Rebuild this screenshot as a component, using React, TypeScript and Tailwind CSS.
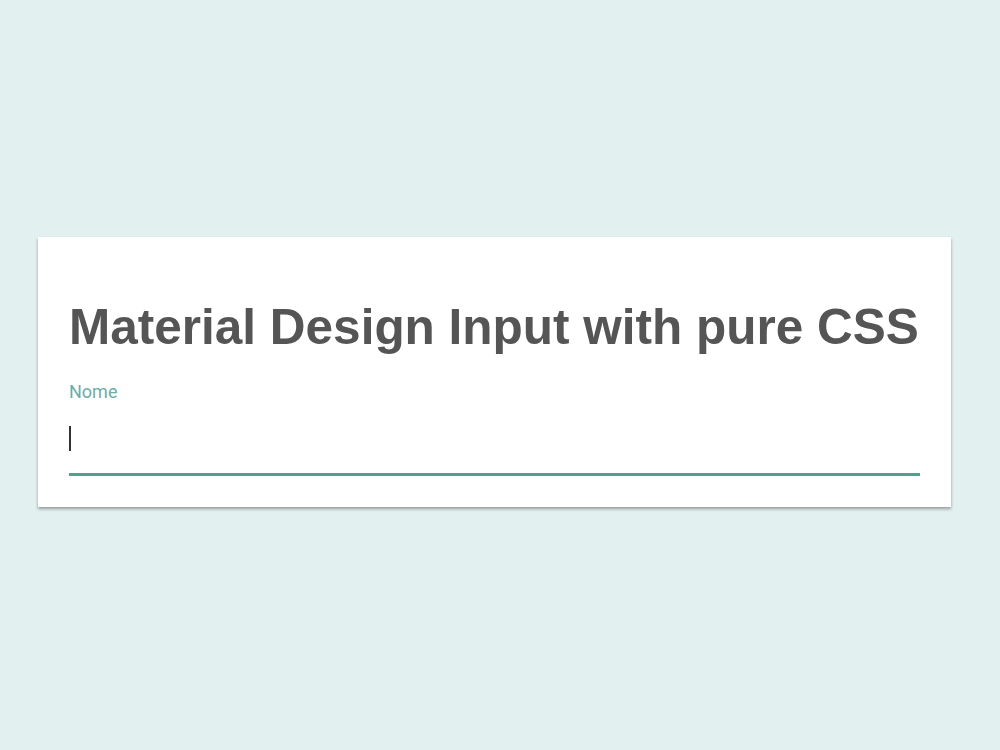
export default function App() {
  return (
    <div className="min-h-screen w-full bg-[#e3f0f0] pt-[237px] px-[38px]" style={{ fontFamily: '"Liberation Sans", Arial, sans-serif' }}>
      <div className="w-[913px] h-[270px] bg-white px-[31px] pt-[62px] shadow-[0_2px_3px_rgba(0,0,0,0.35)]">
        <h1 className="text-[49.5px] leading-[56px] font-bold text-[#555555] whitespace-nowrap">
          Material Design Input with pure CSS
        </h1>
        <label className="block mt-[27px] text-[18px] leading-[20px] text-[#6aaea6]" style={{ fontFamily: "Roboto, sans-serif" }}>
          Nome
        </label>
        <div className="mt-[18px] h-[56px] border-b-[3px] border-[#4fa08f] relative">
          <span className="absolute left-0 top-[6px] w-[2px] h-[25px] bg-[#333]" />
        </div>
      </div>
    </div>
  );
}
